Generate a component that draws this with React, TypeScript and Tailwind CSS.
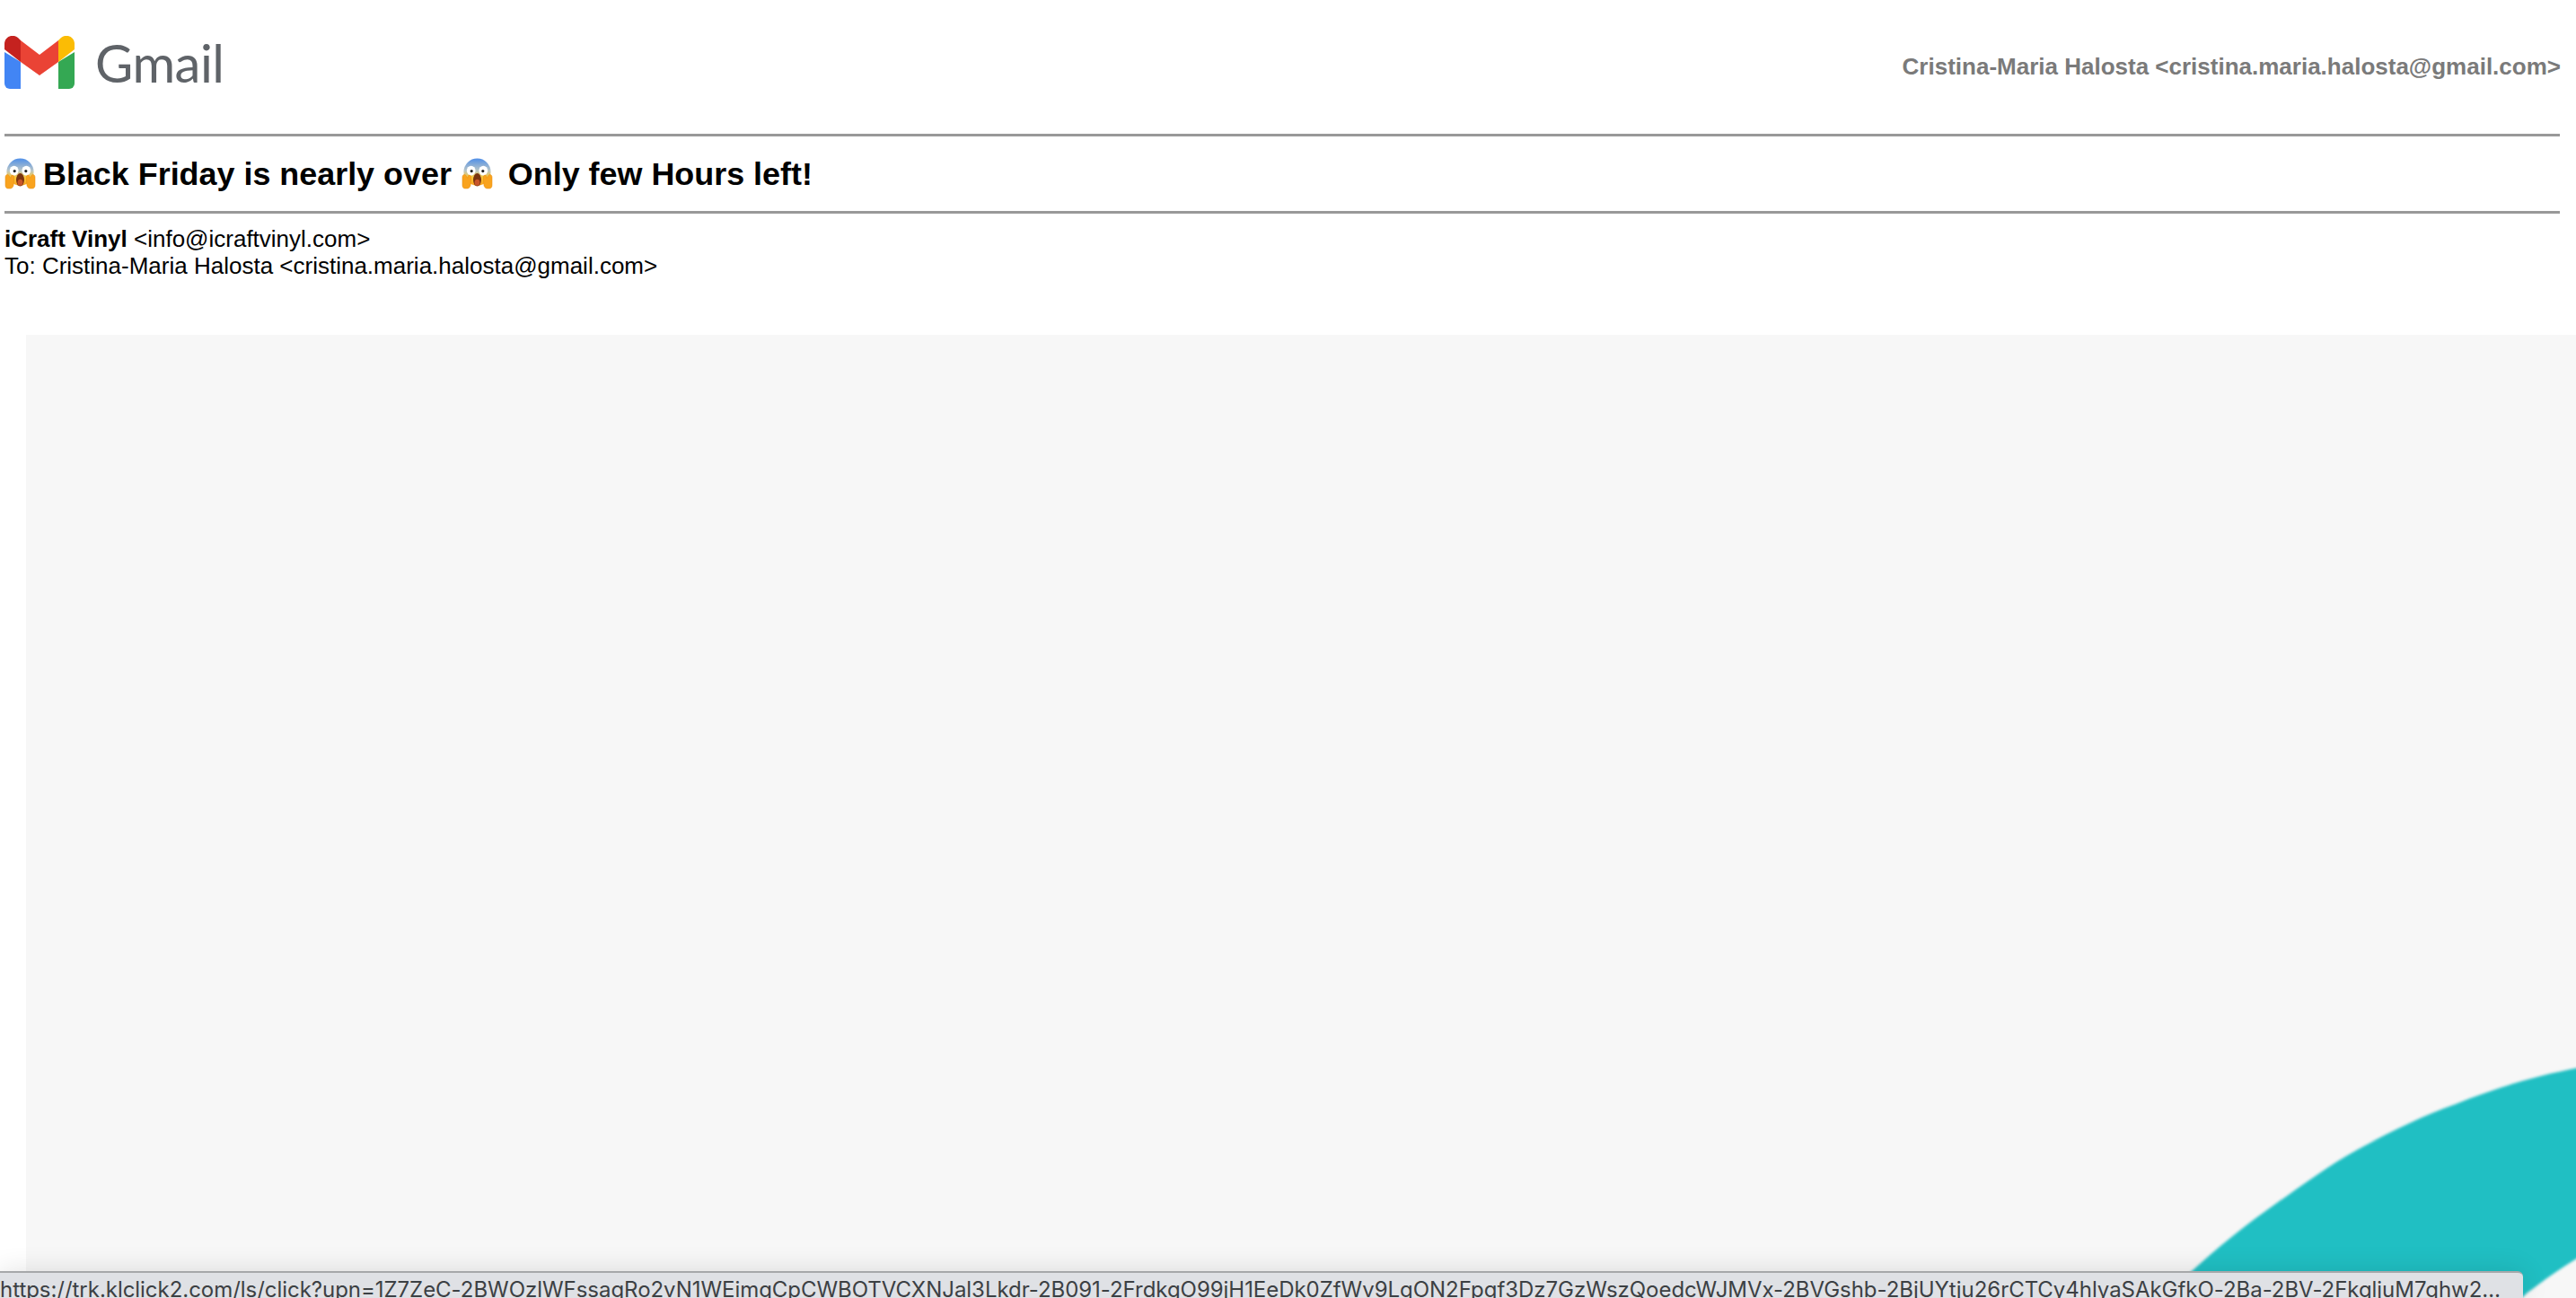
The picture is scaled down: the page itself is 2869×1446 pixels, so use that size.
const Scream = ({ className }: { className: string }) => (
  <svg viewBox="0 0 36 36" className={className}>
    <defs>
      <linearGradient id="sf" x1="0" y1="0" x2="0" y2="1">
        <stop offset="0" stopColor="#4f8fe8" />
        <stop offset="0.45" stopColor="#b9c6c8" />
        <stop offset="0.7" stopColor="#fbc93a" />
        <stop offset="1" stopColor="#f9a31e" />
      </linearGradient>
    </defs>
    <circle cx="18" cy="16" r="15.5" fill="url(#sf)" />
    <ellipse cx="11" cy="14.5" rx="5" ry="5.5" fill="#fff" />
    <ellipse cx="25" cy="14.5" rx="5" ry="5.5" fill="#fff" />
    <circle cx="11.5" cy="15" r="1.6" fill="#222" />
    <circle cx="24.5" cy="15" r="1.6" fill="#222" />
    <ellipse cx="18" cy="25" rx="4.6" ry="7.5" fill="#7a3410" />
    <ellipse cx="18" cy="28" rx="3" ry="3.6" fill="#c8552a" />
    <path d="M1 22c0-3 3-4 4-2l2 3 1-3c1-1 3 0 3 2l-.5 8c0 3-2 5-4 5H4c-2 0-3-2-3-4z" fill="#f9a31e" stroke="#e58a10" strokeWidth=".5" />
    <path d="M35 22c0-3-3-4-4-2l-2 3-1-3c-1-1-3 0-3 2l.5 8c0 3 2 5 4 5H32c2 0 3-2 3-4z" fill="#f9a31e" stroke="#e58a10" strokeWidth=".5" />
  </svg>
);

const GmailM = () => (
  <svg viewBox="0 0 78 59" className="h-[59px] w-[78px] shrink-0 blur-[0.5px]">
    <path d="M0 18V53a6 6 0 0 0 6 6H18V29z" fill="#4285f4" />
    <path d="M60 29V59H72a6 6 0 0 0 6-6V18z" fill="#34a853" />
    <path d="M60 5V29L78 15V9C78 1 69-3 63 2z" fill="#fbbc04" />
    <path d="M18 29V5L39 21 60 5V29L39 44z" fill="#ea4335" />
    <path d="M0 9V15L18 29V5L15 2C9-3 0 1 0 9z" fill="#c5221f" />
  </svg>
);

export default function App() {
  return (
    <div className="relative flex h-[1446px] w-full flex-col overflow-hidden bg-white font-['Liberation_Sans',Arial,sans-serif] text-black">
      <header className="flex h-[149px] items-start justify-between pl-[5px] pr-[17px] pt-[40px]">
        <div className="flex items-center gap-[23px]">
          <GmailM />
          <span className="font-['Lato',sans-serif] text-[58px] leading-[59px] tracking-[-0.5px] text-[#5f6368] blur-[0.7px]">Gmail</span>
        </div>
        <span className="pt-[19px] text-[26px] leading-[30px] font-bold text-[#7a7a7a]">
          Cristina-Maria Halosta &lt;cristina.maria.halosta@gmail.com&gt;
        </span>
      </header>

      <div className="ml-[5px] mr-[18px] h-[3px] bg-[#999999]" />

      <h1 className="flex h-[83px] items-center pl-[5px] text-[35.9px] leading-[40px] font-bold">
        <Scream className="mr-[8px] h-[35px] w-[35px] shrink-0" />
        <span>Black Friday is nearly over</span>
        <Scream className="ml-[11px] mr-[17px] h-[35px] w-[35px] shrink-0" />
        <span>Only few Hours left!</span>
      </h1>

      <div className="ml-[5px] mr-[18px] h-[3px] bg-[#999999]" />

      <div className="pl-[5px] pt-[14px] text-[26px] leading-[29.5px]">
        <div>
          <b>iCraft Vinyl</b> &lt;info@icraftvinyl.com&gt;
        </div>
        <div>To: Cristina-Maria Halosta &lt;cristina.maria.halosta@gmail.com&gt;</div>
      </div>

      <main className="relative ml-[29px] mt-[62px] flex-1 overflow-hidden bg-[#f7f7f7]">
        <svg viewBox="0 0 469 256" className="absolute bottom-0 right-0 h-[256px] w-[469px] overflow-visible">
          <path
            d="M0 264L40 227C70 200 100 175 136 150C165 130 195 107 227 90C262 71 298 53 335 40C380 22 425 8 480-2V206C455 220 435 235 415 250L400 264Z"
            fill="#20bfc3"
            className="blur-[1.5px]"
          />
        </svg>
      </main>

      <div className="absolute bottom-0 left-0 h-[30px] w-[2810px] overflow-hidden rounded-tr-md border-t-2 border-[#a6a8aa] bg-[#dfe1e5] font-['Inter',sans-serif] text-[24px] leading-[38px] tracking-[-0.04px] text-[#3c4043] whitespace-nowrap shadow-[0_0_30px_rgba(0,0,0,0.12)]">
        https://trk.klclick2.com/ls/click?upn=1Z7ZeC-2BWOzlWFssagRo2vN1WEimgCpCWBOTVCXNJal3Lkdr-2B091-2FrdkgO99jH1EeDk0ZfWv9LgON2Fpgf3Dz7GzWszQoedcWJMVx-2BVGshb-2BjUYtju26rCTCy4hlyaSAkGfkO-2Ba-2BV-2FkgljuM7ghw2…
      </div>
    </div>
  );
}
